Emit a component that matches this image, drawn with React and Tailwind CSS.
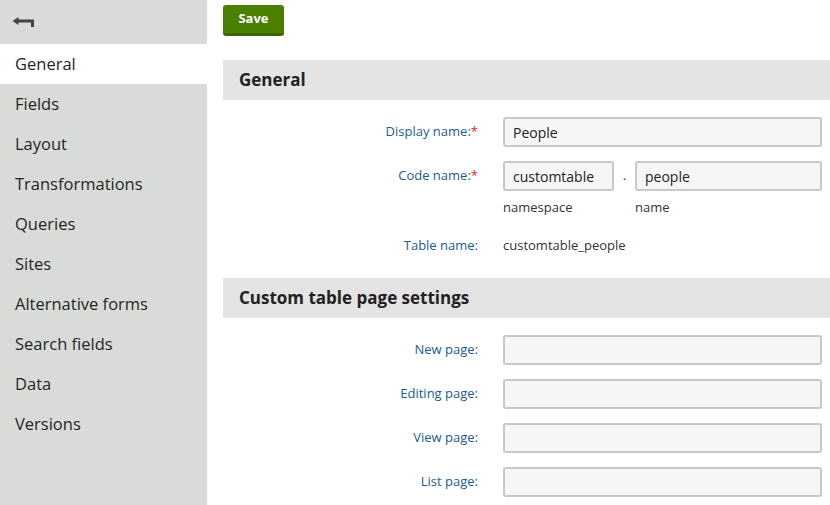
const font = { fontFamily: '"Open Sans", "Noto Sans", sans-serif' };

const navItems = ['General', 'Fields', 'Layout', 'Transformations', 'Queries', 'Sites', 'Alternative forms', 'Search fields', 'Data', 'Versions'];

function BackArrow() {
  return (
    <svg width="23" height="12" viewBox="0 0 23 12" fill="none">
      <path d="M5 4 H20.5 V10" stroke="#444" strokeWidth="3" strokeLinejoin="miter" />
      <path d="M0.5 4 L6.5 0 V8 Z" fill="#444" />
    </svg>
  );
}

function Label({ children, required }) {
  return (
    <div className="w-[255px] shrink-0 text-right text-[13px] font-medium text-[#1a5b94]">
      {children}
      {required && <span className="text-[#e8191e]">*</span>}
    </div>
  );
}

function Input({ value, className = '' }) {
  return (
    <div className={`flex h-[30px] items-center rounded-[3px] border-2 border-[#c8c8c8] bg-[#f6f6f6] px-[8px] text-[14px] text-[#222] ${className}`}>
      {value}
    </div>
  );
}

function Row({ label, required, children }) {
  return (
    <div className="flex items-center pr-[8px]">
      <Label required={required}>{label}</Label>
      <div className="ml-[25px] flex flex-1 items-center">{children}</div>
    </div>
  );
}

function SectionHeader({ title }) {
  return (
    <div className="flex h-[40px] items-center bg-[#e4e4e4] pl-[16px] text-[17px] font-bold text-[#222]">
      {title}
    </div>
  );
}

export default function App() {
  return (
    <div className="flex h-[505px] w-[830px] overflow-hidden bg-white" style={font}>
      <aside className="w-[207px] shrink-0 bg-[#d9dbd8]">
        <div className="flex h-[44px] items-center pl-[12px] pt-[2px]">
          <BackArrow />
        </div>
        {navItems.map((item, i) => (
          <div
            key={item}
            className={`flex h-[40px] items-center pl-[15px] text-[16.5px] text-[#262626] ${i === 0 ? 'bg-white' : ''}`}
          >
            {item}
          </div>
        ))}
      </aside>

      <main className="flex-1 pl-[16px]">
        <div className="pt-[5px]">
          <button
            type="button"
            className="h-[31px] w-[61px] rounded-[3px] border-b-[3px] border-[#3c6500] bg-[#4a7f00] text-[13px] font-bold text-white"
          >
            Save
          </button>
        </div>

        <div className="mt-[24px]">
          <SectionHeader title="General" />
        </div>

        <div className="mt-[17px] space-y-[14px]">
          <Row label="Display name:" required>
            <Input value="People" className="flex-1" />
          </Row>
          <Row label="Code name:" required>
            <Input value="customtable" className="w-[111px]" />
            <span className="w-[21px] text-center text-[13px] text-[#333]">.</span>
            <Input value="people" className="flex-1" />
          </Row>
        </div>
        <div className="mt-[7px] flex text-[13px] text-[#333]">
          <div className="ml-[280px] w-[132px]">namespace</div>
          <div>name</div>
        </div>
        <div className="mt-[18px]">
          <Row label="Table name:">
            <span className="text-[13px] text-[#333]">customtable_people</span>
          </Row>
        </div>

        <div className="mt-[23px]">
          <SectionHeader title="Custom table page settings" />
        </div>

        <div className="mt-[17px] space-y-[14px]">
          <Row label="New page:"><Input className="flex-1" /></Row>
          <Row label="Editing page:"><Input className="flex-1" /></Row>
          <Row label="View page:"><Input className="flex-1" /></Row>
          <Row label="List page:"><Input className="flex-1" /></Row>
        </div>
      </main>
    </div>
  );
}
